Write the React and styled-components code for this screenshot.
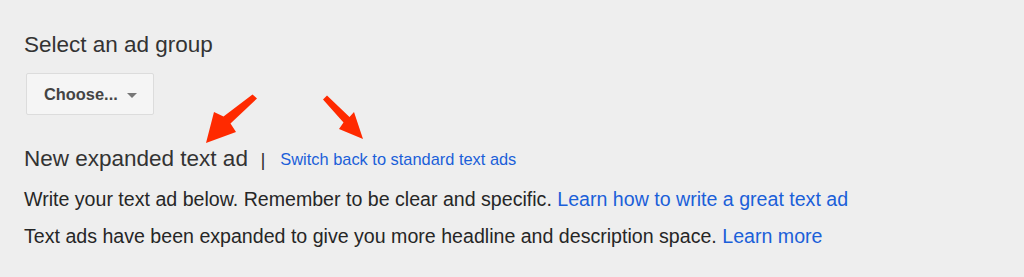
import React from "react";
import styled, { createGlobalStyle } from "styled-components";

const Global = createGlobalStyle`
  html, body { margin: 0; padding: 0; background: #eeeeee; }
  body { font-family: Arial, "Liberation Sans", Helvetica, sans-serif; }
`;

const Page = styled.div`
  position: relative;
  width: 1024px;
  height: 277px;
  box-sizing: border-box;
  padding: 32px 0 0 24px;
  background: #eeeeee;
  overflow: hidden;
`;

const Heading = styled.div`
  font-size: 22.5px;
  line-height: 26px;
  color: #333333;
  margin-top: ${(p) => p.$mt || 0}px;
  display: flex;
  align-items: baseline;
`;

const Pipe = styled.span`
  font-size: 19px;
  color: #333333;
  margin: 0 15px 0 12.5px;
`;

const SmallLink = styled.a`
  font-size: 16.4px;
  color: #1b5fd9;
  text-decoration: none;
  position: relative;
  top: -1px;
`;

const Dropdown = styled.button`
  margin: 15px 0 0 2px;
  box-sizing: border-box;
  height: 42px;
  width: 128px;
  padding: 0 17px;
  display: flex;
  align-items: center;
  gap: 9px;
  background: #f5f5f5;
  border: 1px solid #dcdcdc;
  border-radius: 2px;
  font-family: Arial, "Liberation Sans", Helvetica, sans-serif;
  font-weight: bold;
  font-size: 16.4px;
  color: #444444;
  cursor: pointer;
`;

const Caret = styled.span`
  width: 0;
  height: 0;
  border-left: 5px solid transparent;
  border-right: 5px solid transparent;
  border-top: 5px solid #777777;
  margin-top: 2px;
`;

const Text = styled.p`
  margin: ${(p) => p.$mt || 0}px 0 0;
  font-size: 19.6px;
  line-height: 24px;
  color: #262626;
`;

const Link = styled.a`
  color: #1b5fd9;
  text-decoration: none;
`;

const Annotations = styled.svg`
  position: absolute;
  left: 0;
  top: 0;
  pointer-events: none;
`;

export default function App() {
  return (
    <>
      <Global />
      <Page>
        <Heading>Select an ad group</Heading>
        <Dropdown>
          Choose...
          <Caret />
        </Dropdown>
        <Heading $mt={31}>
          New expanded text ad
          <Pipe>|</Pipe>
          <SmallLink href="#">Switch back to standard text ads</SmallLink>
        </Heading>
        <Text $mt={14}>
          Write your text ad below. Remember to be clear and specific.{" "}
          <Link href="#">Learn how to write a great text ad</Link>
        </Text>
        <Text $mt={13}>
          Text ads have been expanded to give you more headline and description space.{" "}
          <Link href="#">Learn more</Link>
        </Text>
        <Annotations width="1024" height="277" viewBox="0 0 1024 277">
          <polygon
            fill="#ff2a00"
            points="252.5,94.5 257,98.5 230.5,123.5 236,132 206,143 214,112 223.5,116.5"
          />
          <polygon
            fill="#ff2a00"
            points="323,99.5 327,95.5 349.5,117 354,112 363,139 339,129 343.5,122.5"
          />
        </Annotations>
      </Page>
    </>
  );
}
